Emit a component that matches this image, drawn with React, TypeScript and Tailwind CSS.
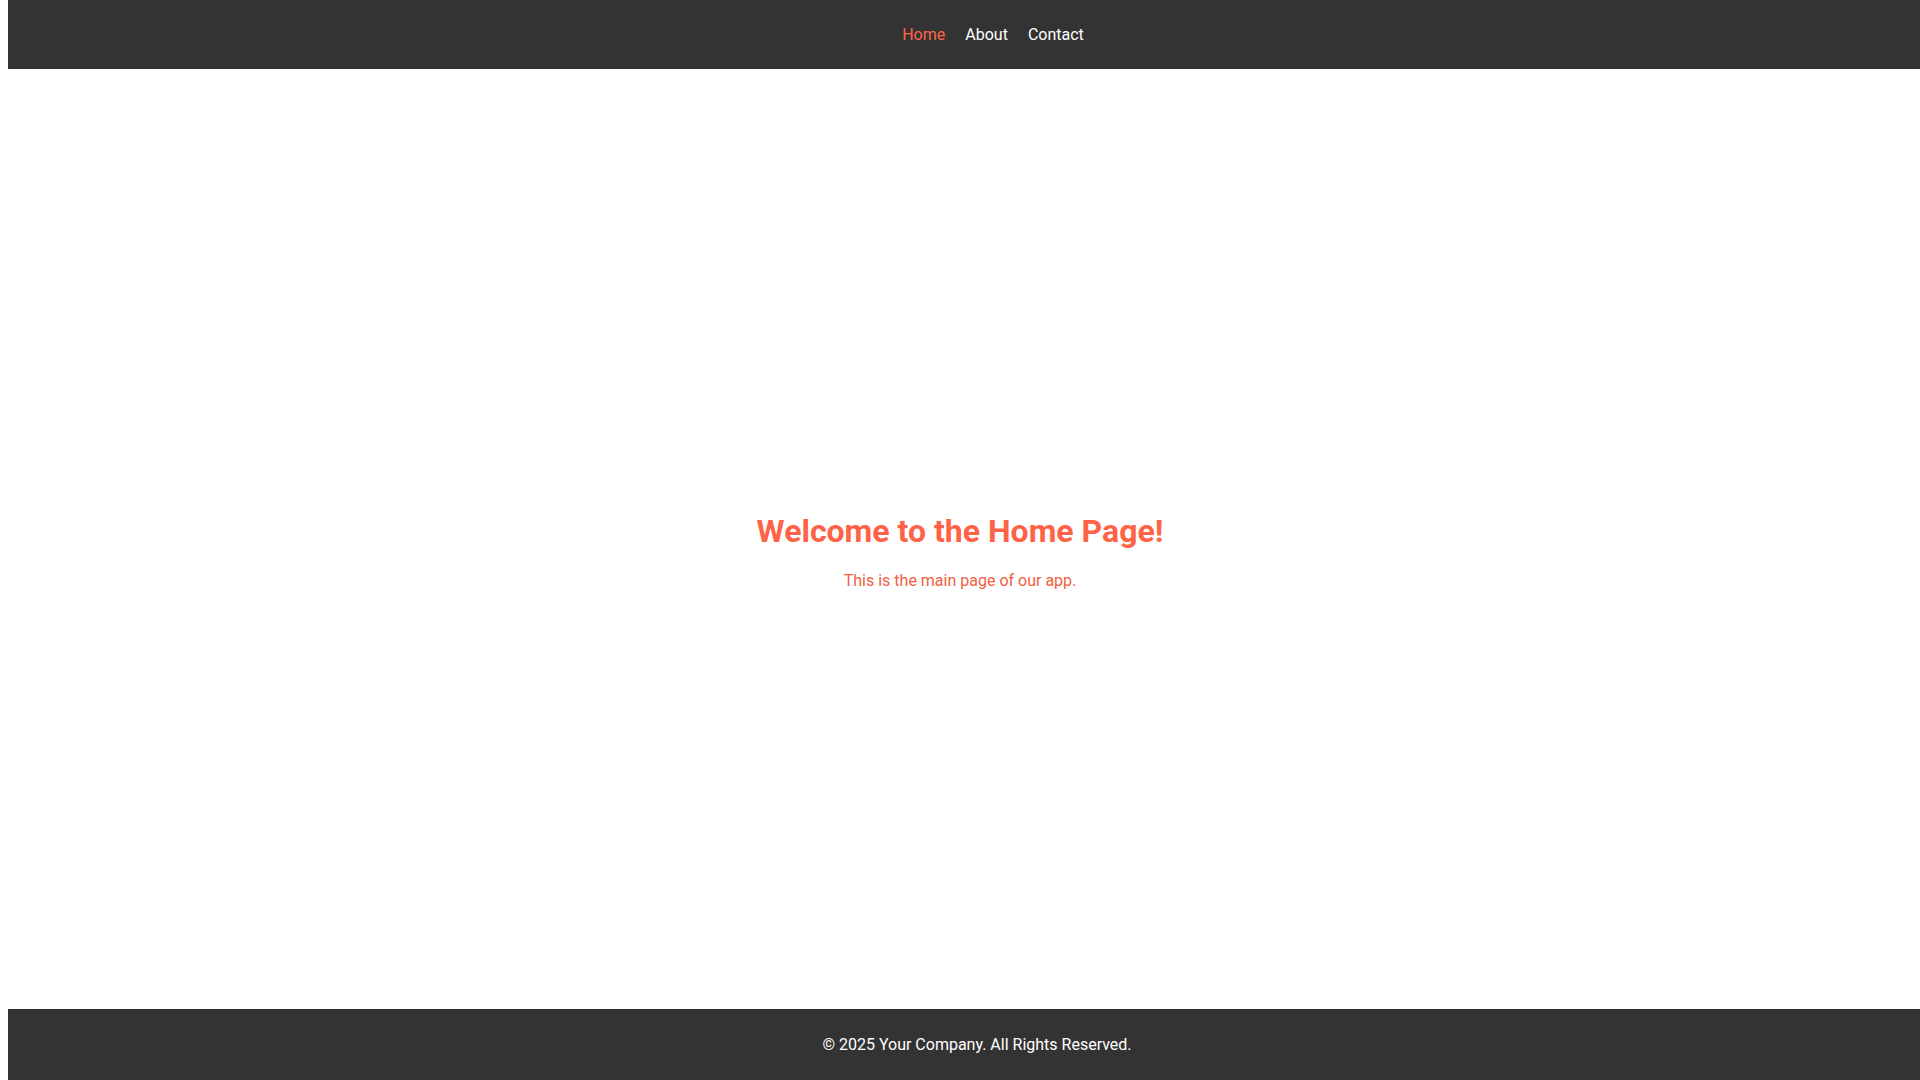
// Simple three-part page: dark nav bar, centered welcome message, dark footer.

const links = [
  { label: "Home", active: true },
  { label: "About", active: false },
  { label: "Contact", active: false },
];

export default function App() {
  return (
    <div className="flex min-h-screen flex-col bg-white pl-2 font-['Roboto',sans-serif]">
      <header className="flex h-[69px] items-center justify-center bg-[#333333] pl-[58px] pt-px">
        <nav className="flex items-center gap-5 text-base">
          {links.map((l) => (
            <a
              key={l.label}
              href="#"
              className={l.active ? "text-[#ff6347]" : "text-white"}
            >
              {l.label}
            </a>
          ))}
        </nav>
      </header>

      <main className="flex flex-1 flex-col items-center justify-center pr-[8px] pt-[27px]">
        <h1 className="text-[32px] leading-[38px] font-bold text-[#ff6347]">
          Welcome to the Home Page!
        </h1>
        <p className="mt-[19px] text-[16px] leading-6 text-[#f0603f]">
          This is the main page of our app.
        </p>
      </main>

      <footer className="flex h-[71px] items-center justify-center bg-[#333333] pl-[26px]">
        <p className="text-[16px] text-white">© 2025 Your Company. All Rights Reserved.</p>
      </footer>
    </div>
  );
}
